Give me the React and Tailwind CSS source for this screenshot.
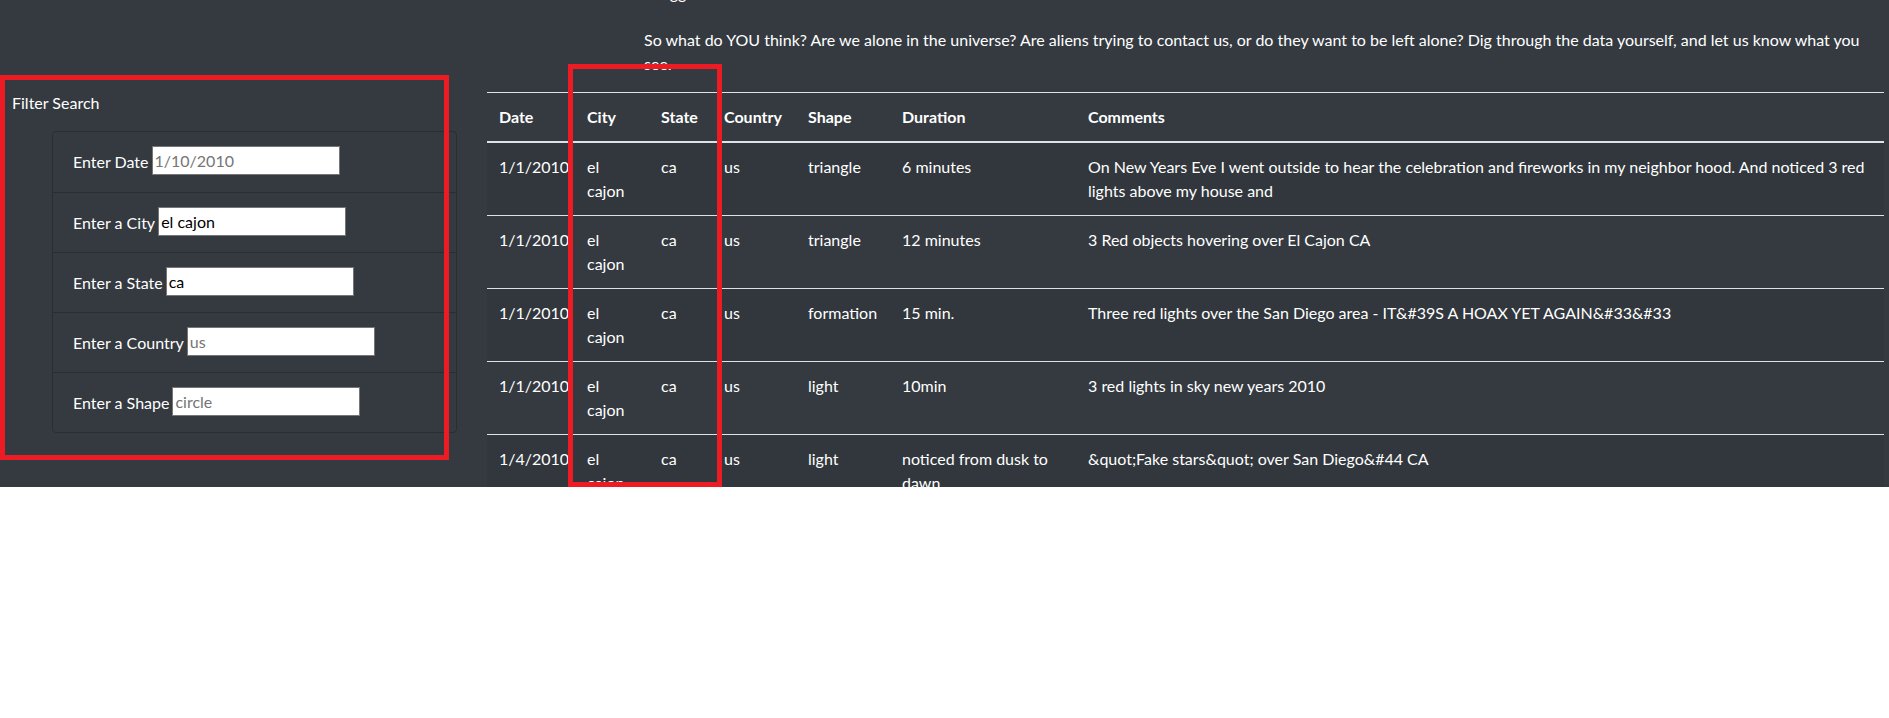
import React from "react";

const filters = [
  { label: "Enter Date", value: "", placeholder: "1/10/2010" },
  { label: "Enter a City", value: "el cajon", placeholder: "" },
  { label: "Enter a State", value: "ca", placeholder: "" },
  { label: "Enter a Country", value: "", placeholder: "us" },
  { label: "Enter a Shape", value: "", placeholder: "circle" },
];

const rows = [
  {
    date: "1/1/2010",
    shape: "triangle",
    duration: ["6 minutes"],
    comments: [
      "On New Years Eve I went outside to hear the celebration and fireworks in my neighbor hood. And noticed 3 red",
      "lights above my house and",
    ],
  },
  { date: "1/1/2010", shape: "triangle", duration: ["12 minutes"], comments: ["3 Red objects hovering over El Cajon CA"] },
  {
    date: "1/1/2010",
    shape: "formation",
    duration: ["15 min."],
    comments: ["Three red lights over the San Diego area - IT&#39S A HOAX YET AGAIN&#33&#33"],
  },
  { date: "1/1/2010", shape: "light", duration: ["10min"], comments: ["3 red lights in sky new years 2010"] },
  {
    date: "1/4/2010",
    shape: "light",
    duration: ["noticed from dusk to", "dawn"],
    comments: ["&quot;Fake stars&quot; over San Diego&#44 CA"],
  },
];

const Lines = ({ lines }) =>
  lines.map((l, i) => (
    <React.Fragment key={i}>
      {i > 0 && <br />}
      {l}
    </React.Fragment>
  ));

const App = () => {
  return (
    <div className="bg-white min-h-screen font-['Lato','Liberation_Sans',sans-serif] text-[16px] leading-6">
      <div className="relative h-[487px] overflow-hidden bg-[#343a40] text-white">
        <div className="flex">
          {/* Filters */}
          <div className="w-[472px] shrink-0 pl-[12px] pr-[15px] pt-[91px]">
            <p>Filter Search</p>
            <ul className="ml-[40px] mt-[16px] rounded border border-black/20">
              {filters.map((f, i) => (
                <li
                  key={f.label}
                  className={`flex h-[60px] items-center px-5 ${i > 0 ? "border-t border-black/20" : ""}`}
                >
                  <label className="mr-[3px] whitespace-nowrap">{f.label}</label>
                  <input
                    type="text"
                    defaultValue={f.value}
                    placeholder={f.placeholder}
                    className="-mt-[3px] h-[29px] w-[188px] border border-[#767676] bg-white px-[2px] text-[16px] text-black placeholder:text-[#757575]"
                  />
                </li>
              ))}
            </ul>
          </div>

          {/* Table */}
          <div className="flex-1 pl-[15px] pr-[5px]">
            <p className="ml-[157px] -mt-[19px] mb-[23px] pl-[13px] whitespace-nowrap">bigger</p>
            <p className="ml-[157px] mb-4 whitespace-nowrap">
              So what do YOU think? Are we alone in the universe? Are aliens trying to contact us, or do they want to be left alone? Dig through the data yourself, and let us know what you
              <br />
              see.
            </p>
            <table className="w-full table-fixed border-collapse text-left">
              <colgroup>
                <col className="w-[88px]" />
                <col className="w-[74px]" />
                <col className="w-[63px]" />
                <col className="w-[84px]" />
                <col className="w-[94px]" />
                <col className="w-[186px]" />
                <col />
              </colgroup>
              <thead>
                <tr className="border-t border-b-2 border-t-[#dee2e6] border-b-[#dee2e6]">
                  {["Date", "City", "State", "Country", "Shape", "Duration", "Comments"].map((h) => (
                    <th key={h} className="p-3 align-bottom font-bold">
                      {h}
                    </th>
                  ))}
                </tr>
              </thead>
              <tbody>
                {rows.map((r, i) => (
                  <tr key={i} className={`border-t border-[#dee2e6] ${i % 2 === 0 ? "bg-black/5" : ""}`}>
                    <td className="p-3 align-top">{r.date}</td>
                    <td className="p-3 align-top">
                      el
                      <br />
                      cajon
                    </td>
                    <td className="p-3 align-top">ca</td>
                    <td className="p-3 align-top">us</td>
                    <td className="p-3 align-top">{r.shape}</td>
                    <td className="p-3 align-top">
                      <Lines lines={r.duration} />
                    </td>
                    <td className="p-3 align-top">
                      <Lines lines={r.comments} />
                    </td>
                  </tr>
                ))}
              </tbody>
            </table>
          </div>
        </div>

        {/* red highlight boxes */}
        <div className="absolute left-0 top-[75px] h-[385px] w-[449px] border-[5px] border-[#ed1c24]" />
        <div className="absolute left-[568px] top-[64px] h-[423px] w-[154px] border-[5px] border-[#ed1c24]" />
      </div>
    </div>
  );
};

export default App;
